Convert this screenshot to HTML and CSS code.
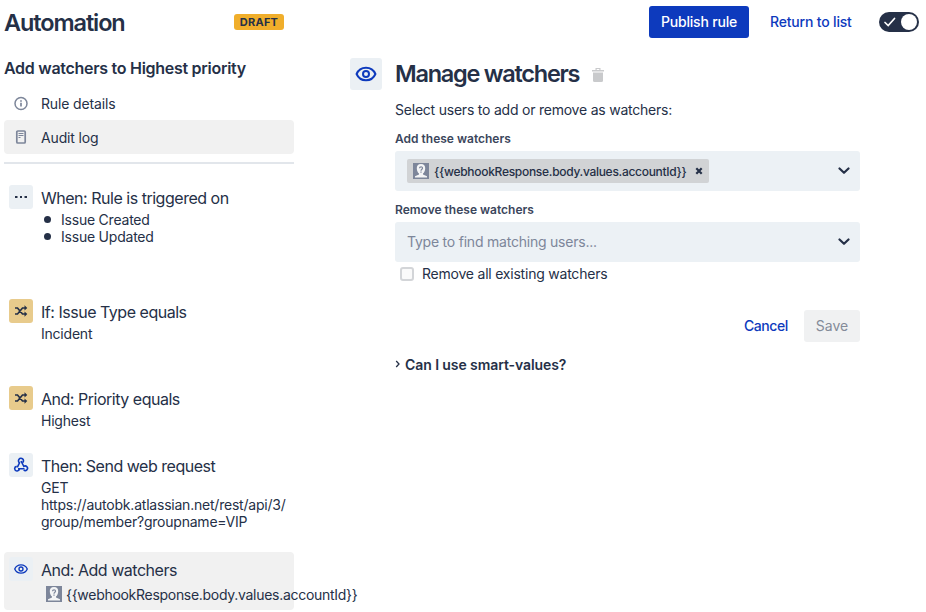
FILE: index.html
```html
<!DOCTYPE html>
<html lang="en">
<head>
<meta charset="utf-8">
<title>Automation</title>
<link rel="stylesheet" href="styles.css">
</head>
<body>
<svg class="defs" width="0" height="0" aria-hidden="true">
  <symbol id="eye" viewBox="0 0 24 24"><path d="M2.600 12C4.300 8 8 5.800 12 5.800S19.700 8 21.400 12C19.700 16 16 18.200 12 18.200S4.300 16 2.600 12Z" fill="none" stroke="currentColor" stroke-width="2"/><circle cx="12" cy="12" r="3" fill="none" stroke="currentColor" stroke-width="2"/></symbol>
  <symbol id="shuffle" viewBox="0 0 24 24"><rect width="24" height="24" rx="3" fill="#e8cb8c"/><path d="M6 9H8.500L13.500 15H17M6 15H8.500L13.500 9H17" fill="none" stroke="currentColor" stroke-width="1.700"/><path d="M15.500 6.300 18.300 9 15.500 11.500ZM15.500 12.500 18.300 15 15.500 17.700Z" fill="currentColor"/></symbol>
  <symbol id="avatar" viewBox="0 0 16 16"><path fill="#7d869a" d="M0 0H16V16H0Z"/><path fill="#f4f5f6" d="M8 1C5 1 3.600 3 3.800 5.500 4 8 4.700 9.600 6 10.500V11.500L2 13.200V14.500H14V13.200L10 11.500V10.500C11.300 9.600 12 8 12.200 5.500 12.400 3 11 1 8 1Z"/><path fill="none" stroke="#7d869a" stroke-width="1.200" d="M6.500 5.200C6.600 3.300 9.600 3.300 9.500 5.200 9.500 6.200 8 6.300 8 7.700M8 8.600V9.700"/></symbol>
  <symbol id="chevron" viewBox="0 0 12 8"><path d="M1.500 1.500 6 5.800 10.500 1.500" fill="none" stroke="currentColor" stroke-width="2.200" stroke-linecap="round" stroke-linejoin="round"/></symbol>
</svg>
<div class="page">
  <header class="topbar">
    <h1 class="page-title">Automation</h1>
    <span class="badge">DRAFT</span>
    <div class="actions">
      <button class="btn primary">Publish rule</button>
      <a class="link return">Return to list</a>
      <span class="toggle"><svg width="14" height="12" viewBox="0 0 14 12"><path d="M2 6.500 5.200 9.500 11.500 2.500" fill="none" stroke="#fff" stroke-width="1.700" stroke-linecap="round"/></svg><i class="knob"></i></span>
    </div>
  </header>
  <div class="columns">
    <aside class="sidebar">
      <h2 class="rule-name">Add watchers to Highest priority</h2>
      <nav class="nav">
        <a class="nav-item"><svg width="16" height="16" viewBox="0 0 16 16"><circle cx="8" cy="7.500" r="6" fill="none" stroke="currentColor" stroke-width="1.500"/><path d="M8 6.700V10.500M8 4.200V5.700" stroke="currentColor" stroke-width="1.700"/></svg><span>Rule details</span></a>
        <a class="nav-item selected"><svg width="16" height="16" viewBox="0 0 16 16"><rect x="3.800" y="2" width="8.400" height="12" rx="1" fill="none" stroke="currentColor" stroke-width="1.700"/><path d="M5.500 4.500H10.500M5.500 6.500H10.500M5.500 8.500H7.500" stroke="currentColor" stroke-width="1"/></svg><span>Audit log</span></a>
      </nav>
      <section class="step trigger">
        <span class="tile"><svg width="16" height="16" viewBox="0 0 16 16"><path d="M2 7H4.500V9H2ZM7 7H9V9H7ZM11.500 7H14V9H11.500Z" fill="#253047"/></svg></span>
        <div class="step-body"><h3>When: Rule is triggered on</h3>
          <ul><li>Issue Created</li><li>Issue Updated</li></ul></div>
      </section>
      <section class="step condition">
        <svg class="amber" width="24" height="24"><use href="#shuffle"/></svg>
        <div class="step-body"><h3>If: Issue Type equals</h3><p>Incident</p></div>
      </section>
      <section class="step priority">
        <svg class="amber" width="24" height="24"><use href="#shuffle"/></svg>
        <div class="step-body"><h3>And: Priority equals</h3><p>Highest</p></div>
      </section>
      <section class="step request">
        <span class="tile"><svg width="16" height="16" viewBox="0 0 16 16" fill="none" stroke="currentColor" stroke-width="1.600"><path d="M9.800 5.500A2.500 2.500 0 1 0 6.500 5.800L4.300 10.300M8 4 10.800 9.400A2.300 2.300 0 1 1 10.700 13M6.300 11.500A2.300 2.300 0 1 1 3.600 9.400M5 11.700H11.500"/></svg></span>
        <div class="step-body"><h3>Then: Send web request</h3><p>GET<br>https://autobk.atlassian.net/rest/api/3/<br>group/member?groupname=VIP</p></div>
      </section>
      <section class="step active">
        <span class="tile"><svg width="16" height="16"><use href="#eye"/></svg></span>
        <div class="step-body"><h3>And: Add watchers</h3><div class="watcher"><svg width="16" height="16"><use href="#avatar"/></svg><span class="value">{{webhookResponse.body.values.accountId}}</span></div></div>
      </section>
    </aside>
    <main class="main">
      <span class="tile large"><svg width="24" height="24"><use href="#eye"/></svg></span>
      <div class="form">
        <div class="form-head"><h2>Manage watchers</h2>
          <svg class="trash" width="12" height="16" viewBox="0 0 12 16" fill="#c9cacc"><path d="M0 3H3.500V1H8.500V3H12V4.500H0ZM4.700 2V3H7.300V2Z" fill-rule="evenodd"/><path d="M1 5.500H11V13.500Q11 15 9.500 15H2.500Q1 15 1 13.500Z"/></svg></div>
        <p class="intro">Select users to add or remove as watchers:</p>
        <label class="label">Add these watchers</label>
        <div class="select"><span class="chip"><svg width="16" height="16"><use href="#avatar"/></svg><span>{{webhookResponse.body.values.accountId}}</span><svg class="remove" width="8" height="8" viewBox="0 0 8 8"><path d="M1.300 1.300 6.700 6.700M6.700 1.300 1.300 6.700" stroke="#253047" stroke-width="2.200"/></svg></span><svg width="12" height="8"><use href="#chevron"/></svg></div>
        <label class="label">Remove these watchers</label>
        <div class="select"><span class="placeholder">Type to find matching users...</span><svg width="12" height="8"><use href="#chevron"/></svg></div>
        <div class="check"><i class="box"></i><span>Remove all existing watchers</span></div>
        <div class="form-actions"><a class="link cancel">Cancel</a><button class="btn save">Save</button></div>
        <div class="help"><svg width="6" height="8" viewBox="0 0 6 8"><path d="M1.200 1 4 4 1.200 7" fill="none" stroke="currentColor" stroke-width="1.300"/></svg><span>Can I use smart-values?</span></div>
      </div>
    </main>
  </div>
</div>
</body>
</html>
```
FILE: styles.css
```css
* { box-sizing: border-box; }
body { margin: 0; background: #fff; color: #253047; font: 440 14px/17px Inter, "Liberation Sans", sans-serif; letter-spacing: -0.22px; white-space: nowrap; overflow: hidden; }
h1, h2, h3, p, ul { margin: 0; padding: 0; }
svg { display: block; flex: none; }
.defs { position: absolute; }
.page { height: 612px; padding: 0 4px; }
.topbar { display: flex; height: 44px; align-items: center; }
.page-title { width: 230px; padding-top: 2px; font-size: 23.5px; line-height: 30px; font-weight: 570; letter-spacing: -1.1px; }
.badge { width: 50px; height: 16px; border-radius: 3px; background: #f0ae2b; font-size: 11px; line-height: 16px; font-weight: 700; text-align: center; letter-spacing: 0.25px; }
.actions { display: flex; align-items: center; margin-left: auto; padding-right: 3px; }
.btn { height: 32px; border: 0; border-radius: 3px; padding: 0; font: 500 14px/32px Inter, sans-serif; }
.primary { width: 100px; background: #0d3abd; color: #fff; letter-spacing: -0.2px; }
.link { color: #0d3abd; font-weight: 500; padding-bottom: 1px; }
.return { width: 83px; margin: 0 26px 0 21px; letter-spacing: -0.18px; }
.toggle { display: flex; align-items: center; justify-content: space-between; width: 40px; height: 20px; border-radius: 10px; background: #253047; padding: 0 2px 0 4px; }
.knob { width: 16px; height: 16px; border-radius: 50%; background: #fff; }
.columns { display: flex; }
.sidebar { width: 290px; flex: none; }
.rule-name { height: 43px; padding-top: 14px; font-size: 16px; line-height: 20px; font-weight: 600; letter-spacing: -0.28px; }
.nav { padding-bottom: 8px; margin-bottom: 16px; border-bottom: 2px solid #e2e6eb; letter-spacing: -0.15px; }
.nav-item { display: flex; align-items: center; height: 33px; padding-left: 9px; gap: 12px; border-radius: 4px; }
.nav-item svg { color: #7d869a; }
.nav-item.selected { height: 34px; background: #f1f1f1; }
.step { display: flex; padding: 5px 5px 0; gap: 8px; border-radius: 4px; }
.trigger { height: 114px; }
.condition { height: 87px; }
.priority { height: 67px; }
.request { height: 104px; }
.active { height: 58px; background: #f1f1f1; }
.tile { display: grid; place-items: center; width: 24px; height: 24px; flex: none; border-radius: 3px; background: #ebf0f4; color: #0d3abd; }
.step-body { padding-top: 1px; }
h3 { height: 25px; font-size: 16px; line-height: 25px; font-weight: 430; letter-spacing: -0.48px; }
ul { list-style: none; }
li { display: flex; align-items: center; height: 17px; gap: 10px; padding-left: 3px; }
li::before { content: ""; width: 7px; height: 7px; border-radius: 50%; background: #253047; }
.watcher { display: flex; align-items: center; gap: 4px; height: 22px; padding-left: 5px; }
.value { letter-spacing: -0.29px; }
.main { display: flex; gap: 13px; margin-left: 56px; padding-top: 14px; }
.large { width: 32px; height: 32px; }
.form { width: 465px; }
.form-head { display: flex; align-items: center; gap: 13px; height: 32px; }
.form-head h2 { font-size: 23.5px; line-height: 32px; font-weight: 580; letter-spacing: -1.25px; }
.trash { margin-top: 2px; }
.intro { height: 20px; line-height: 20px; margin-top: 10px; }
.label { display: block; height: 16px; margin: 11px 0 4px; font-size: 12px; line-height: 16px; font-weight: 600; color: #3b465c; letter-spacing: 0; }
.select { display: flex; align-items: center; justify-content: space-between; height: 40px; padding: 0 10px 0 12px; border-radius: 3px; background: #ecf1f5; }
.chip { display: flex; align-items: center; height: 24px; width: 302px; padding: 0 6px; border-radius: 2px; background: #d1d3d5; font-size: 12px; font-weight: 500; gap: 5px; letter-spacing: -0.29px; }
.remove { margin-left: auto; }
.placeholder { color: #7d869a; padding-bottom: 1px; }
.check { display: flex; align-items: center; height: 24px; padding-left: 5px; gap: 8px; }
.check span { padding-bottom: 1px; }
.box { width: 14px; height: 14px; border: 2px solid #d3d5d8; border-radius: 3px; background: #fafafa; }
.form-actions { display: flex; justify-content: flex-end; align-items: center; gap: 16px; margin-top: 24px; }
.cancel { letter-spacing: -0.4px; }
.save { width: 56px; background: #f0f1f2; color: #848b99; font-weight: 400; }
.help { display: flex; align-items: center; gap: 4px; margin-top: 13px; height: 18px; font-weight: 600; letter-spacing: -0.08px; }
```
